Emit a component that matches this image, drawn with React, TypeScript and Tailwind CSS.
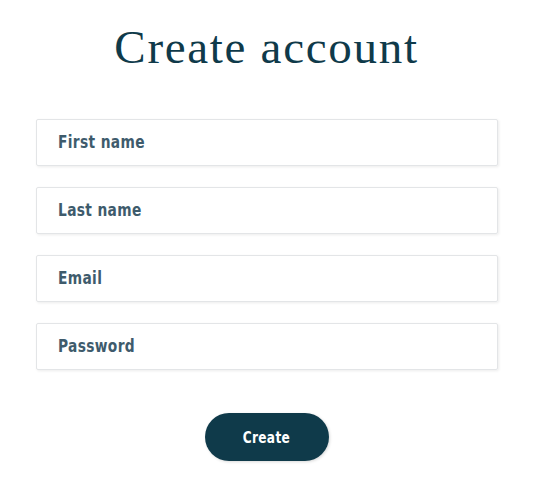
export default function App() {
  const fields = ['First name', 'Last name', 'Email', 'Password'];
  const label = { fontFamily: '"DejaVu Sans Condensed", "Roboto", sans-serif' };
  return (
    <div className="w-[533px] h-[500px] bg-white flex flex-col items-center">
      <h1 className="mt-[20px] text-[47px] leading-[54px] text-[#0f3a4a] tracking-[1.7px]" style={{ fontFamily: '"Liberation Serif", "DejaVu Serif", serif' }}>
        Create account
      </h1>
      <form className="mt-[45px] w-[462px] flex flex-col gap-[21px]">
        {fields.map((f) => (
          <div
            key={f}
            className="h-[47px] border border-[#e3e5e7] rounded-[2px] shadow-[1px_1px_3px_rgba(0,0,0,0.08)] flex items-center px-[21px]"
          >
            <span className="inline-block origin-left scale-x-[0.9] text-[17px] font-bold text-[#3e5b6c] tracking-[0.4px]" style={label}>
              {f}
            </span>
          </div>
        ))}
      </form>
      <button
        className="mt-[43px] w-[124px] h-[48px] rounded-full bg-[#0f3a4a] text-white shadow-[1px_1px_3px_rgba(0,0,0,0.15)]"
      >
        <span className="inline-block scale-x-[0.9] text-[15px] font-bold tracking-[0.4px]" style={label}>
          Create
        </span>
      </button>
    </div>
  );
}
